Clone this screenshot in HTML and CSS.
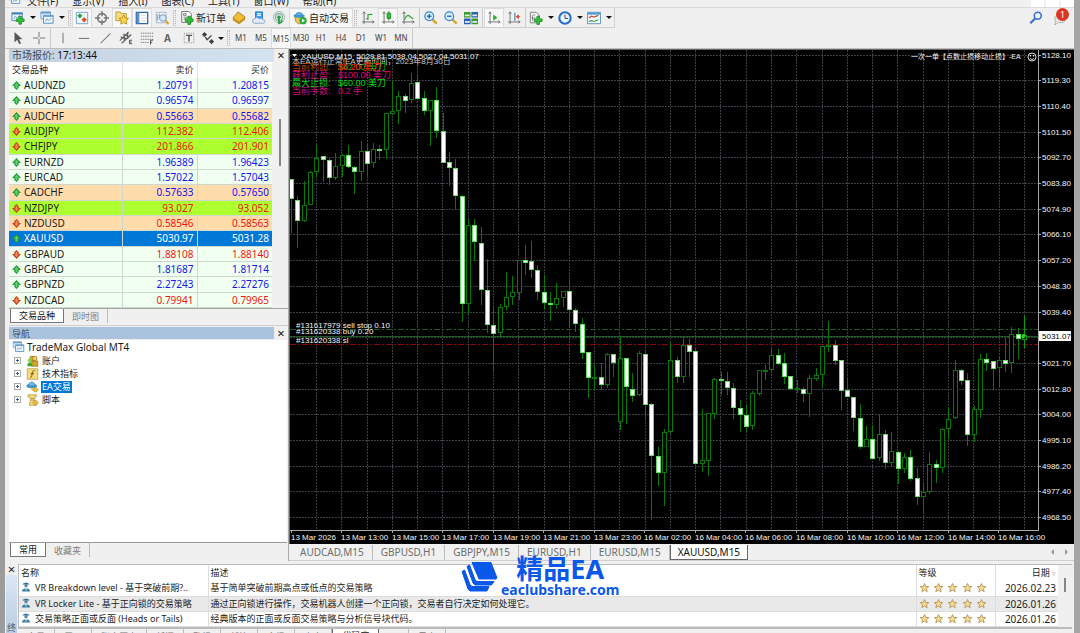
FILE: index.html
```html
<!DOCTYPE html>
<html lang="zh-CN">
<head>
<meta charset="utf-8">
<title>XAUUSD,M15</title>
<link rel="stylesheet" href="styles.css">
</head>
<body>
<svg class="sprite" aria-hidden="true">
  <symbol id="up" viewBox="0 0 10 10"><path d="M5 0 10 5.500H7.500V7.500L5 10 2.500 7.500V5.500H0z" fill="#27963a"/><path d="M5 2 7.500 5H6v3H4V5H2.500z" fill="#5fd46c"/></symbol>
  <symbol id="down" viewBox="0 0 10 10"><path d="M5 10 10 4.500H7.500V2.500L5 0 2.500 2.500V4.500H0z" fill="#c23f1c"/><path d="M5 8 7.500 5H6V2H4v3H2.500z" fill="#f58a5c"/></symbol>
  <symbol id="newchart" viewBox="0 0 16 16"><path d="M1 2h12v9H1z" fill="#e8f3fc" stroke="#4b83b4"/><path d="M1 3h12" stroke="#4b83b4" stroke-width="2"/><path d="M3 9l2-3 2 2 3-3" fill="none" stroke="#6a9cc8"/><path d="M9 6h3v3h3v3h-3v3H9v-3H6V9h3z" fill="#2fc233" stroke="#13811b" stroke-width=".8"/></symbol>
  <symbol id="windows" viewBox="0 0 16 16"><path d="M1 1h11v8H1z" fill="#dcecf9" stroke="#6a9fce"/><path d="M1 2h11" stroke="#6a9fce" stroke-width="2"/><path d="M4 5h11v9H4z" fill="#eef6fd" stroke="#4d86ba"/><path d="M4 6h11" stroke="#6a9fce" stroke-width="1.500"/><path d="M6 12l2-3 2 2 3-3" fill="none" stroke="#5c94c6"/></symbol>
  <symbol id="market" viewBox="0 0 16 16"><path d="M1.500 1.500h13v13h-13z" fill="#f3f9ff" stroke="#5f9fd0"/><path d="M5.500 2.500 8.500 5.500 5.500 8.500 2.500 5.500z" fill="#2aa53a"/><path d="M10.500 7 13.500 10l-3 3-3-3z" fill="#de4a24"/></symbol>
  <symbol id="target" viewBox="0 0 16 16"><circle cx="8" cy="8" r="5" fill="none" stroke="#777" stroke-width="1.800"/><path d="M8 0v6M8 10v6M0 8h6M10 8h6" stroke="#777" stroke-width="1.600"/></symbol>
  <symbol id="navig" viewBox="0 0 16 16"><path d="M1 3V1h5l1 2h6v8H1z" fill="#f6dc80" stroke="#b9963a"/><path d="M10 4.500l1.700 3.500 3.800.5-2.800 2.700.7 3.800-3.400-1.800L6.600 15l.7-3.800-2.800-2.700 3.800-.5z" fill="#ffd84a" stroke="#b98918"/></symbol>
  <symbol id="termi" viewBox="0 0 16 16"><path d="M1.500 1.500h13v13h-13z" fill="#fff" stroke="#336da8" stroke-width="1.500"/><path d="M2 2h3v12H2z" fill="#5c93c9"/><path d="M7 5h6M7 8h6M7 11h6" stroke="#cfdcea"/></symbol>
  <symbol id="tester" viewBox="0 0 16 16"><path d="M1.500 1.500h11v12h-11z" fill="#f1f7fc" stroke="#9ab4cc"/><path d="M3 4v7M5 3v5" stroke="#6a93b8"/><circle cx="9" cy="8" r="3.800" fill="#d7eafa" stroke="#6b8faf"/><path d="M12 11l3.500 4" stroke="#dca32a" stroke-width="2.400"/></symbol>
  <symbol id="order" viewBox="0 0 16 16"><path d="M2 .5h8l3 3V13H2z" fill="#fff" stroke="#666"/><path d="M4 3h3v2H4zM4 7h6M4 9h4" stroke="#777" fill="none"/><path d="M9 6h3v3h3v3h-3v3.500H9V12H6V9h3z" fill="#2fc233" stroke="#13811b" stroke-width=".8"/></symbol>
  <symbol id="gold" viewBox="0 0 16 16"><path d="M7 1l8 6-7 7-7-6z" fill="#eebd3a" stroke="#a97716"/><path d="M1 8l7 4 7-5v3l-7 5-7-4.500z" fill="#c98f1f"/></symbol>
  <symbol id="vps" viewBox="0 0 16 16"><path d="M4 1h8v8H4z" fill="#3aa0ea" stroke="#2078bd"/><path d="M6 3h4M6 5h4" stroke="#e8f6ff" stroke-width="1.500"/><path d="M3 14a2.500 2.500 0 010-5c1-2 4-2 5 0 2-1 4-.5 4.500 1A2 2 0 0113 14z" fill="#e4edf7" stroke="#7fa2c9"/></symbol>
  <symbol id="signal" viewBox="0 0 16 16"><circle cx="8" cy="7" r="6.500" fill="#e2ebef" stroke="#9fb4bd"/><circle cx="8" cy="7" r="4" fill="none" stroke="#7fb08c" stroke-width="1.400"/><circle cx="8" cy="7" r="2" fill="#2b9e46"/><path d="M8 8v6c2 0 3-1 4-3" stroke="#2b9e46" stroke-width="2" fill="none"/></symbol>
  <symbol id="robot" viewBox="0 0 16 16"><path d="M2 6h10l-1 6-4 3-4-3z" fill="#f0c954" stroke="#b08a26"/><ellipse cx="7" cy="5.500" rx="6.500" ry="2.300" fill="#3d95c9"/><path d="M3 4.500C3 1 11 1 11 4.500" fill="#62b2df" stroke="#2b7fb3"/><circle cx="11.500" cy="11" r="4.200" fill="#27ae38"/><path d="M10.200 8.800l3.600 2.200-3.600 2.200z" fill="#fff"/></symbol>
  <symbol id="axes" viewBox="0 0 16 16"><path d="M3.500 1v14M1 12.500h14M2 3l1.500-2L5 3M13 11l2 1.500-2 1.500" stroke="#666" fill="none"/></symbol>
  <symbol id="bars" viewBox="0 0 16 16"><use href="#axes"/><path d="M8 10V4h3V3M8 9H6M11 4h2" stroke="#2c9b36" fill="none" stroke-width="1.300"/></symbol>
  <symbol id="candle" viewBox="0 0 16 16"><use href="#axes"/><path d="M9 0v11" stroke="#16851f"/><path d="M7 2.500h4v6H7z" fill="#2bc435" stroke="#16851f"/></symbol>
  <symbol id="linech" viewBox="0 0 16 16"><use href="#axes"/><path d="M4 10c2-5 4-6 6-4 1 1 2 2 4 3" stroke="#35a440" stroke-width="1.400" fill="none"/></symbol>
  <symbol id="zin" viewBox="0 0 16 16"><path d="M9.500 9.500l5 5" stroke="#d9a52c" stroke-width="2.800"/><circle cx="6" cy="6" r="5" fill="#d9efff" stroke="#3b87cc" stroke-width="1.500"/><path d="M6 3.500v5M3.500 6h5" stroke="#1f6fbc" stroke-width="1.600"/></symbol>
  <symbol id="zout" viewBox="0 0 16 16"><path d="M9.500 9.500l5 5" stroke="#d9a52c" stroke-width="2.800"/><circle cx="6" cy="6" r="5" fill="#d9efff" stroke="#3b87cc" stroke-width="1.500"/><path d="M3.500 6h5" stroke="#1f6fbc" stroke-width="1.600"/></symbol>
  <symbol id="tile" viewBox="0 0 16 16"><path d="M0 1h7.500v6.500H0zM8.500 8.500H16V15H8.500z" fill="#3b9a2c"/><path d="M8.500 1H16v6.500H8.500zM0 8.500h7.500V15H0z" fill="#2d5fb4"/><path d="M1 4h5.500v2H1zM9.500 4H15v2H9.500zM1 11.500h5.500v2H1zM9.500 11.500H15v2H9.500z" fill="#dff0e6"/></symbol>
  <symbol id="scroll" viewBox="0 0 16 16"><use href="#axes"/><path d="M7 4l5 3.500L7 11z" fill="#2fae3a"/></symbol>
  <symbol id="shift" viewBox="0 0 16 16"><use href="#axes"/><path d="M9 2v9" stroke="#447ca8" stroke-width="1.300"/><path d="M10.500 6.500l2.500-2v4zM13 6.500h2" fill="#d2492a" stroke="#d2492a"/></symbol>
  <symbol id="indi" viewBox="0 0 16 16"><path d="M1.500 1.500h7l3 3v9h-10z" fill="#f4f4f4" stroke="#777"/><path d="M4 11V6c0-2 2-2 3-1M3 8h4" stroke="#777" fill="none"/><path d="M9 6h3v3h3v3h-3v3.500H9V12H6V9h3z" fill="#2fc233" stroke="#13811b" stroke-width=".8"/></symbol>
  <symbol id="clock" viewBox="0 0 16 16"><circle cx="8" cy="8" r="6.500" fill="#eaf4fd" stroke="#2a6fc0" stroke-width="2.400"/><path d="M8 4v4.500h3.500" stroke="#333" fill="none"/></symbol>
  <symbol id="template" viewBox="0 0 16 16"><path d="M.5 1.500h15v13H.5z" fill="#f2f8fd" stroke="#4b8ac0"/><path d="M1 3h14" stroke="#5b9bd3" stroke-width="2.400"/><path d="M2 8l3-2 3 1 5-2" stroke="#c0543c" fill="none" stroke-width="1.300"/><path d="M2 12l3-1 3 1 5-2" stroke="#4a9b50" fill="none" stroke-width="1.300"/></symbol>
  <symbol id="cursor" viewBox="0 0 16 16"><path d="M4 1v12l3-3 2.500 5 2-1L9 9.500h4z" fill="#555"/></symbol>
  <symbol id="cross" viewBox="0 0 16 16"><path d="M8 1v6M8 9v6M1 8h6M9 8h6" stroke="#777" stroke-width="1.200"/></symbol>
  <symbol id="vline" viewBox="0 0 16 16"><path d="M8 2v12" stroke="#777" stroke-width="1.200"/></symbol>
  <symbol id="hline" viewBox="0 0 16 16"><path d="M2 8.500h12" stroke="#777" stroke-width="1.200"/></symbol>
  <symbol id="dline" viewBox="0 0 16 16"><path d="M3 14L14 3" stroke="#777" stroke-width="1.200"/></symbol>
  <symbol id="channel" viewBox="0 0 16 16"><path d="M1 11L11 1M3 14L14 4M2 7l7 2M5 4l7 3M6 12V3M10 9V1" stroke="#555" stroke-width="1.200"/><path d="M15 10.500h-3v4h3M12 12.500h2.500" stroke="#444" fill="none"/></symbol>
  <symbol id="fibo" viewBox="0 0 16 16"><path d="M1 2.500h14M1 6h14M1 9.500h14M1 13h9" stroke="#666" stroke-dasharray="1.500 1"/><path d="M12 15.500v-5h3M12 13h2" stroke="#444" fill="none"/></symbol>
  <symbol id="label" viewBox="0 0 16 16"><path d="M2.500 2.500h11v11h-11z" fill="none" stroke="#888" stroke-dasharray="1 1"/><path d="M4.500 5h7M8 5v7" stroke="#555" stroke-width="1.700"/></symbol>
  <symbol id="arrows" viewBox="0 0 16 16"><path d="M4 1l3 3-3 3-3-3zM12 9l3 3-3 3-3-3z" fill="#444"/><path d="M5 7l2 3 5-5" stroke="#444" fill="none" stroke-width="1.600"/></symbol>
  <symbol id="users" viewBox="0 0 16 16"><path d="M5 2h6v6H5zM7 8h8v7H7z" fill="#d6a62c" stroke="#9a7413"/><circle cx="11" cy="4.500" r="3" fill="#f1cf61" stroke="#9a7413"/><circle cx="4" cy="7" r="2.500" fill="#8fd14f"/><path d="M1 15c0-7 7-7 7 0z" fill="#3ca62b"/></symbol>
  <symbol id="func" viewBox="0 0 16 16"><path d="M1 1h14v14H1z" fill="#f4dc7c" stroke="#b8983a"/><path d="M11 3.500C8 3 8 6 7.500 8S7 13 5 12.500M5.500 7.500h4.500" stroke="#6b5210" fill="none" stroke-width="1.300"/></symbol>
  <symbol id="hat" viewBox="0 0 16 16"><ellipse cx="7" cy="6.500" rx="7" ry="3" fill="#3f94cb"/><path d="M3 5.500C3 0 11 0 11 5.500" fill="#76bce6" stroke="#3582b5"/><path d="M5 9c0 3 2 4 4 4l2-3" fill="#f2cf65"/><path d="M12 8l3.500 3.500L12 15l-3.500-3.500z" fill="#f0c23c" stroke="#a97d15"/></symbol>
  <symbol id="script" viewBox="0 0 16 16"><path d="M2 1h11v3h-2v8h2v3H4v-3h1V4H2z" fill="#f3db84" stroke="#b8983a"/><path d="M6 6h4M6 8h4" stroke="#a88a30"/><path d="M12 8l3.500 3.500L12 15l-3.500-3.500z" fill="#f0c23c" stroke="#a97d15"/></symbol>
  <symbol id="expert" viewBox="0 0 12 12"><path d="M2 2l4-1.500L10 2v1H2z" fill="#2a6f94"/><circle cx="6" cy="4.500" r="2" fill="#58869c"/><path d="M1 11.500C1 6 11 6 11 11.500z" fill="#3e7f9f"/><path d="M5 7h2l-1 4z" fill="#e6f1f7"/></symbol>
  <symbol id="stars" viewBox="0 0 68 12"><g fill="#f3df90" stroke="#c09a62"><path id="st" d="M5.500 1.500l1.200 2.900 3.100.2-2.400 2 .8 3.100-2.700-1.700-2.700 1.700.8-3.100-2.400-2 3.100-.2z"/><use href="#st" x="14"/><use href="#st" x="28"/><use href="#st" x="43"/><use href="#st" x="57"/></g></symbol>
</svg>

<div class="app">
  <nav class="menubar">
    <svg class="menu-logo"><use href="#windows"/></svg>
    <button>文件(F)</button><button>显示(V)</button><button>插入(I)</button><button>图表(C)</button><button>工具(T)</button><button>窗口(W)</button><button>帮助(H)</button>
    <span class="winbtns"><i></i><i></i><i></i></span>
  </nav>

  <div class="toolbar main-tools">
    <div class="tools">
      <button class="drop" aria-label="新图表"><svg><use href="#newchart"/></svg><b></b></button>
      <button class="drop" aria-label="配置"><svg><use href="#windows"/></svg><b></b></button>
      <i class="grip"></i>
      <button class="on" aria-label="市场报价"><svg><use href="#market"/></svg></button>
      <button aria-label="数据窗口"><svg><use href="#target"/></svg></button>
      <button class="on" aria-label="导航"><svg><use href="#navig"/></svg></button>
      <button class="on" aria-label="终端"><svg><use href="#termi"/></svg></button>
      <button aria-label="测试"><svg><use href="#tester"/></svg></button>
      <i class="grip"></i>
      <button class="wide"><svg><use href="#order"/></svg>新订单</button>
      <button aria-label="编辑器"><svg><use href="#gold"/></svg></button>
      <button aria-label="主机"><svg><use href="#vps"/></svg></button>
      <button aria-label="信号"><svg><use href="#signal"/></svg></button>
      <button class="wide on"><svg><use href="#robot"/></svg>自动交易</button>
      <i class="grip"></i>
      <button aria-label="柱状图"><svg><use href="#bars"/></svg></button>
      <button class="on" aria-label="蜡烛图"><svg><use href="#candle"/></svg></button>
      <button aria-label="折线图"><svg><use href="#linech"/></svg></button>
      <i class="sep"></i>
      <button aria-label="放大"><svg><use href="#zin"/></svg></button>
      <button aria-label="缩小"><svg><use href="#zout"/></svg></button>
      <button aria-label="平铺"><svg><use href="#tile"/></svg></button>
      <i class="sep"></i>
      <button class="on" aria-label="自动滚动"><svg><use href="#scroll"/></svg></button>
      <button aria-label="图表平移"><svg><use href="#shift"/></svg></button>
      <i class="sep"></i>
      <button class="drop" aria-label="指标"><svg><use href="#indi"/></svg><b></b></button>
      <button class="drop" aria-label="周期"><svg><use href="#clock"/></svg><b></b></button>
      <button class="drop" aria-label="模板"><svg><use href="#template"/></svg><b></b></button>
    </div>
    <div class="right-tools">
      <button aria-label="搜索"><svg viewBox="0 0 16 16"><circle cx="10" cy="5.500" r="4" fill="#e9f2fd" stroke="#3e6fc8" stroke-width="1.800"/><path d="M7 8.500L1.500 14" stroke="#3e6fc8" stroke-width="2.600"/></svg></button>
      <button class="notify" aria-label="通知"><svg viewBox="0 0 16 16"><path d="M2 8c0-5 12-5 12 1s-6 4-8 4l-4 3 1-4z" fill="#e6e6e6" stroke="#aaa"/></svg><span>1</span></button>
    </div>
  </div>

  <div class="toolbar line-tools">
    <button aria-label="光标"><svg><use href="#cursor"/></svg></button>
    <button aria-label="十字"><svg><use href="#cross"/></svg></button>
    <i class="sep"></i>
    <button aria-label="垂直线"><svg><use href="#vline"/></svg></button>
    <button aria-label="水平线"><svg><use href="#hline"/></svg></button>
    <button aria-label="趋势线"><svg><use href="#dline"/></svg></button>
    <button aria-label="通道"><svg><use href="#channel"/></svg></button>
    <button aria-label="斐波那契"><svg><use href="#fibo"/></svg></button>
    <button class="letter">A</button>
    <button aria-label="标签"><svg><use href="#label"/></svg></button>
    <button class="drop" aria-label="箭头"><svg><use href="#arrows"/></svg><b></b></button>
    <i class="grip"></i>
    <div class="periods"><button>M1</button><button>M5</button><button class="on">M15</button><button>M30</button><button>H1</button><button>H4</button><button>D1</button><button>W1</button><button>MN</button></div>
    <i class="sep"></i>
  </div>

  <div class="workspace">
    <aside class="side">
      <section class="market">
        <header class="cap cap-light"><h2>市场报价: <b>17:13:44</b></h2><button aria-label="关闭">×</button></header>
        <div class="market-body">
          <table class="quotes">
            <colgroup><col class="c-sym"><col class="c-bid"><col></colgroup>
            <thead><tr><th>交易品种</th><th>卖价</th><th>买价</th></tr></thead>
            <tbody>
              <tr class="up"><td><svg><use href="#up"/></svg>AUDNZD</td><td>1.20791</td><td>1.20815</td></tr>
              <tr class="up"><td><svg><use href="#up"/></svg>AUDCAD</td><td>0.96574</td><td>0.96597</td></tr>
              <tr class="up peach"><td><svg><use href="#up"/></svg>AUDCHF</td><td>0.55663</td><td>0.55682</td></tr>
              <tr class="dn lime"><td><svg><use href="#down"/></svg>AUDJPY</td><td>112.382</td><td>112.406</td></tr>
              <tr class="dn lime"><td><svg><use href="#down"/></svg>CHFJPY</td><td>201.866</td><td>201.901</td></tr>
              <tr class="up"><td><svg><use href="#up"/></svg>EURNZD</td><td>1.96389</td><td>1.96423</td></tr>
              <tr class="up"><td><svg><use href="#up"/></svg>EURCAD</td><td>1.57022</td><td>1.57043</td></tr>
              <tr class="up peach"><td><svg><use href="#up"/></svg>CADCHF</td><td>0.57633</td><td>0.57650</td></tr>
              <tr class="dn lime"><td><svg><use href="#down"/></svg>NZDJPY</td><td>93.027</td><td>93.052</td></tr>
              <tr class="dn peach"><td><svg><use href="#down"/></svg>NZDUSD</td><td>0.58546</td><td>0.58563</td></tr>
              <tr class="sel"><td><svg><use href="#up"/></svg>XAUUSD</td><td>5030.97</td><td>5031.28</td></tr>
              <tr class="dn"><td><svg><use href="#down"/></svg>GBPAUD</td><td>1.88108</td><td>1.88140</td></tr>
              <tr class="up"><td><svg><use href="#up"/></svg>GBPCAD</td><td>1.81687</td><td>1.81714</td></tr>
              <tr class="up"><td><svg><use href="#up"/></svg>GBPNZD</td><td>2.27243</td><td>2.27276</td></tr>
              <tr class="dn"><td><svg><use href="#down"/></svg>NZDCAD</td><td>0.79941</td><td>0.79965</td></tr>
            </tbody>
          </table>
          <div class="gutter"><i></i></div>
        </div>
        <div class="tabs"><button class="cur">交易品种</button><button>即时图</button></div>
      </section>
      <section class="navi">
        <header class="cap"><h2>导航</h2><button aria-label="关闭">×</button></header>
        <ul class="tree">
          <li class="root"><svg><use href="#windows"/></svg><span>TradeMax Global MT4</span></li>
          <li><i></i><svg><use href="#users"/></svg><span>账户</span></li>
          <li><i></i><svg><use href="#func"/></svg><span>技术指标</span></li>
          <li class="picked"><i></i><svg><use href="#hat"/></svg><span>EA交易</span></li>
          <li><i></i><svg><use href="#script"/></svg><span>脚本</span></li>
        </ul>
        <div class="tabs"><button class="cur">常用</button><button>收藏夹</button></div>
      </section>
    </aside>

    <main class="chart-area">
      <svg id="chart" class="chart" viewBox="289 49 785 495" preserveAspectRatio="xMinYMin meet"></svg>
      <div class="chart-tabs">
        <button>AUDCAD,M15</button><button>GBPUSD,H1</button><button>GBPJPY,M15</button><button>EURUSD,H1</button><button>EURUSD,M15</button><button class="cur">XAUUSD,M15</button>
        <span class="pager"><i></i><i class="next"></i></span>
      </div>
    </main>
  </div>

  <section class="terminal">
    <div class="rail"><button aria-label="关闭">×</button><div>终端</div></div>
    <div class="term-main">
      <div class="term-body">
        <table class="codes">
          <colgroup><col class="c-name"><col><col class="c-rate"><col class="c-date"></colgroup>
          <thead><tr><th>名称</th><th>描述</th><th>等级</th><th>日期 <small>▿</small></th></tr></thead>
          <tbody>
            <tr><td><svg><use href="#expert"/></svg>VR Breakdown level - 基于突破前期?..</td><td>基于简单突破前期高点或低点的交易策略</td><td><svg class="stars"><use href="#stars"/></svg></td><td>2026.02.23</td></tr>
            <tr class="alt"><td><svg><use href="#expert"/></svg>VR Locker Lite - 基于正向锁的交易策略</td><td>通过正向锁进行操作，交易机器人创建一个正向锁，交易者自行决定如何处理它。</td><td><svg class="stars"><use href="#stars"/></svg></td><td>2026.01.26</td></tr>
            <tr><td><svg><use href="#expert"/></svg>交易策略正面或反面 (Heads or Tails)</td><td>经典版本的正面或反面交易策略与分析信号块代码。</td><td><svg class="stars"><use href="#stars"/></svg></td><td>2026.01.26</td></tr>
          </tbody>
        </table>
        <div class="gutter"><i></i></div>
      </div>
      <div class="term-tabs"><button>交易</button><button>展示</button><button>账户历史</button><button>新闻</button><button>警报</button><button>邮箱</button><button>市场</button><button>文章</button><button class="cur">代码库</button><button>EA</button><button>日志</button></div>
    </div>
  </section>
</div>

<div class="mark">
  <svg viewBox="0 0 38 32"><g fill="#0a58ea" stroke="#0a58ea" stroke-linejoin="round"><path d="M12 1.500h19L37 17l-1 1H19z"/><path d="M7 5.500l2.500-1.500L15 18.500l2 2h17L31.500 24H15l-2-2z"/><path d="M2 10.500L4.500 9l5.500 14.500 2 2h17L27 30H10l-2-2z"/></g></svg>
  <p><strong>精品EA</strong><span>eaclubshare.com</span></p>
</div>
<script src="chart.js"></script>
</body>
</html>
```
FILE: styles.css
```css
* { box-sizing: border-box; }
body { margin: 0; font: 10px/14px "Noto Sans", "Noto Sans CJK SC", sans-serif; color: #1c1c1c; }
button { font: inherit; color: inherit; border: 0; background: none; padding: 0; margin: 0; }
h2, p, ul { margin: 0; padding: 0; font-size: inherit; font-weight: normal; list-style: none; }
.sprite { position: absolute; width: 0; height: 0; }

.app { height: 100vh; overflow: hidden; display: flex; flex-direction: column; background: #f0f0f0; border-left: 5px solid #9c9c9c; border-right: 6px solid #a6a6a6; }

.menubar { height: 8px; flex: none; display: flex; align-items: flex-end; gap: 14px; padding-left: 3px; border-bottom: 1px solid #dadada; overflow: hidden; }
.menubar button { line-height: 12px; white-space: nowrap; }
.menu-logo { width: 13px; height: 12px; margin: 0 -8px 2px 0; }
.winbtns { margin-left: auto; display: flex; gap: 2px; }
.winbtns i { width: 13px; height: 8px; background: #fff; }

.toolbar { flex: none; display: flex; align-items: center; color: #222; }
.toolbar svg { width: 14px; height: 14px; flex: none; }
.toolbar button { width: 20px; height: 100%; display: flex; align-items: center; justify-content: center; white-space: nowrap; }
.toolbar button.on { background: #f8f8f8; border: 1px solid #dcdcdc; border-bottom: 0; }
.toolbar button.drop { width: 29px; gap: 5px; }
.drop b { border: 3px solid transparent; border-top-color: #111; border-bottom: 0; }
.toolbar button.wide { width: auto; gap: 2px; padding: 0 3px; }
.grip { width: 3px; height: 16px; margin: 0 1px; flex: none; border-left: 1px solid #ccc; border-right: 1px dotted #b5b5b5; }
.sep { width: 1px; height: 100%; margin: 0 1px; flex: none; background: #ccc; }
.main-tools { height: 20px; justify-content: space-between; }
.tools { height: 100%; display: flex; align-items: center; padding-left: 4px; border: solid #cfcfcf; border-width: 0 1px 1px 0; }
.right-tools { display: flex; gap: 4px; padding-right: 4px; }
.notify { position: relative; }
.notify span { position: absolute; left: 6px; top: -3px; width: 13px; height: 13px; border-radius: 7px; background: #de3520; color: #fff; font-size: 9px; line-height: 13px; text-align: center; }
.line-tools { height: 21px; padding: 0 0 0 2px; border-bottom: 1px solid #bdbdbd; font-size: 8px; color: #444; }
.line-tools > button { width: 21px; }
.line-tools .letter { font-size: 10px; font-weight: bold; color: #666; }
.line-tools button.drop { width: 27px; gap: 3px; }
.periods { height: 100%; display: flex; }

.workspace { flex: 1; min-height: 0; display: flex; }
.side { width: 284px; flex: none; display: flex; flex-direction: column; padding-left: 4px; border-right: 1px solid #aaa; }
.market { display: flex; flex-direction: column; height: 277px; flex: none; border-bottom: 1px solid #cfcfcf; }
.navi { flex: 1; min-height: 0; display: flex; flex-direction: column; padding-top: 1px; }
.cap { flex: none; height: 13px; display: flex; line-height: 13px; }
.cap h2 { flex: 1; background: #a9c3df; padding-left: 3px; color: #3c4a5c; font-size: 9px; }
.cap button { width: 14px; font-size: 13px; color: #111; }
.cap-light h2 { background: linear-gradient(90deg, #c3d1e0, #d5e2f0); font-size: 10px; }
.cap-light b { font-weight: normal; color: #111; }
.market-body { flex: 1; min-height: 0; display: flex; border-bottom: 1px solid #a5a5a5; }
table { border-collapse: collapse; table-layout: fixed; }
td, th { padding: 0; font-weight: normal; text-align: left; white-space: nowrap; overflow: hidden; }
.quotes { flex: 1; height: 100%; line-height: 12px; }
.c-sym { width: 113px; }
.c-bid { width: 75px; }
.quotes thead tr { background: #fff; height: 16px; }
.quotes th { padding: 0 3px; font-size: 9px; border-right: 1px solid #e3e3e3; }
.quotes td { padding: 0 3px; border: solid #cfd8cf; border-width: 0 1px 1px 0; }
.quotes tr > :not(:first-child) { text-align: right; }
.quotes tr > :last-child { border-right: 0; }
.quotes tbody tr { background: #f0fff0; }
.quotes tbody tr.peach { background: #ffdcac; }
.quotes tbody tr.lime { background: #adff2f; }
.quotes tbody tr.sel { background: #0078d7; color: #fff; }
.quotes .up td + td { color: #1414ee; }
.quotes .dn td + td { color: #f01414; }
.quotes svg { width: 9px; height: 9px; margin-right: 3px; vertical-align: -1px; }
.gutter { width: 14px; flex: none; display: flex; justify-content: center; }
.gutter i { width: 2px; background: #858585; }
.market .gutter { width: 16px; padding-top: 57px; }
.market .gutter i { height: 47px; }

.tabs { flex: none; height: 18px; display: flex; align-items: flex-start; padding-left: 1px; }
.market .tabs { height: 16px; }
.tabs button { height: 14px; line-height: 13px; padding: 0 8px; font-size: 9px; color: #7d7d7d; border-right: 1px solid #bbb; }
.tabs .cur { background: #fff; color: #111; border: solid #777; border-width: 0 1px 1px; }
.navi .cap { border-bottom: 1px solid #eee; }
.tree { flex: 1; min-height: 0; background: #fff; border-bottom: 1px solid #999; margin-right: 1px; }
.tree li { display: flex; align-items: center; height: 13px; padding-left: 5px; line-height: 12px; font-size: 9px; }
.tree .root { margin-bottom: 1px; padding-left: 3px; gap: 2px; font-size: 10px; }
.tree svg { width: 13px; height: 12px; flex: none; }
.tree li i { width: 7px; height: 7px; margin-right: 5px; border: 1px solid #aaa; background: linear-gradient(#3a5e9c, #3a5e9c) center / 3px 1px no-repeat, linear-gradient(#3a5e9c, #3a5e9c) center / 1px 3px no-repeat, #fff; }
.tree li:not(.root) span { margin-left: 2px; padding: 0 1px; }
.tree .picked span { background: #0078d7; color: #fff; }

.chart-area { flex: 1; min-width: 0; display: flex; flex-direction: column; }
.chart { flex: 1; min-height: 0; width: 100%; background: #000; }
.chart text { font: 8px "Liberation Sans", "Noto Sans CJK SC", sans-serif; fill: #f4f4f4; }
.chart .stat { font-size: 9px; }
.chart .head { font-size: 7px; }
.chart .price-now { fill: #000; }
.chart-tabs { flex: none; height: 17px; display: flex; align-items: flex-start; padding: 1px 0 0 3px; border-bottom: 1px solid #cfcfcf; }
.chart-tabs button { height: 15px; line-height: 13px; padding: 0 8px; color: #6d6d6d; border-right: 1px solid #bbb; }
.chart-tabs .cur { background: #fff; color: #111; border: solid #666; border-width: 0 1px 1px; padding: 0 7px; }
.pager { margin-left: auto; display: flex; gap: 11px; padding: 4px 6px 0 0; }
.pager i { border: 3px solid transparent; border-right-color: #999; border-left: 0; }
.pager .next { border-left: 3px solid #999; border-right: 0; }

.terminal { flex: none; height: 72px; display: flex; padding-top: 3px; }
.rail { width: 13px; flex: none; display: flex; flex-direction: column; padding: 0 1px; }
.rail button { height: 11px; line-height: 9px; font-size: 13px; }
.rail div { flex: 1; min-height: 0; background: linear-gradient(#dbe7f5, #b9cde3); writing-mode: vertical-rl; padding-top: 48px; font-size: 9px; line-height: 11px; overflow: hidden; color: #555; }
.term-main { flex: 1; min-width: 0; display: flex; flex-direction: column; overflow: hidden; }
.term-body { flex: none; display: flex; border: solid #bbb; border-width: 1px 0 2px 1px; margin-right: 2px; background: #fff; }
.term-body .gutter { background: #f0f0f0; padding-top: 13px; }
.term-body .gutter i { height: 14px; }
.codes { flex: 1; width: 0; font-size: 9px; line-height: 14px; }
.codes tr { height: 15px; }
.codes thead tr { height: 16px; }
.codes td, .codes th { padding: 0 2px; border-right: 1px solid #ddd; }
.codes tbody tr { border-bottom: 1px solid #ddd; }
.codes .alt { background: #e9e9e9; }
.c-name { width: 189px; }
.c-rate { width: 79px; }
.c-date { width: 63px; }
.codes tr > :last-child { text-align: right; border-right: 0; padding-right: 2px; }
.codes td:last-child { font-size: 10px; }
.codes small { font-size: 7px; color: #999; }
.codes svg { width: 10px; height: 10px; margin: 0 4px 0 0; vertical-align: -1px; }
.codes .stars { width: 68px; height: 12px; margin: 0; display: block; }
.term-tabs { flex: none; display: flex; color: #777; font-size: 9px; line-height: 14px; }
.term-tabs button { height: 16px; padding: 0 9px; border-right: 1px solid #bbb; }
.term-tabs .cur { background: #fff; color: #111; border: 1px solid #666; border-top: 0; }

.mark { position: absolute; left: 460px; top: 555px; display: flex; color: #0a58ea; }
.mark svg { width: 38px; height: 32px; margin-top: 6px; }
.mark p { display: flex; flex-direction: column; align-items: center; margin-left: 3px; }
.mark strong { font: bold 27px/28px "Noto Sans", "Noto Sans CJK SC", sans-serif; }
.mark span { font: bold 14px/14px "Noto Sans", sans-serif; }
```
FILE: chart.js
```js
// Candles: [high, top, bottom, low, filled] in chart units, oldest first.
const candles = [
  [179,179,199,233,1],[196,200,221,248,1],[181,205,221,222,0],[171,172,205,205,0],[145,158,172,177,0],
  [156,156,160,182,1],[158,160,178,185,1],[153,166,178,180,0],[154,155,166,177,0],[145,155,167,168,1],
  [166,167,172,194,1],[141,151,172,181,0],[143,151,164,176,1],[143,149,163,168,0],[145,149,151,160,1],
  [113,113,150,159,0],[81,111,114,115,0],[91,96,111,124,0],[94,96,101,113,1],[73,83,100,103,0],
  [75,82,99,100,1],[91,98,111,115,1],[100,100,111,146,0],[87,100,131,138,1],[113,131,163,163,1],
  [152,162,168,186,1],[159,168,196,210,1],[195,196,304,322,1],[219,225,304,314,0],[219,225,242,261,1],
  [227,243,290,305,1],[259,290,325,333,1],[307,325,334,371,1],[304,307,333,337,0],[272,297,307,310,0],
  [276,292,297,305,0],[260,260,293,300,0],[245,260,263,275,1],[241,261,270,278,1],[265,270,292,300,1],
  [275,292,303,309,1],[292,303,305,321,1],[283,298,305,309,0],[291,291,298,307,0],[280,291,310,328,1],
  [308,310,324,332,1],[318,324,353,359,1],[352,352,378,398,1],[364,377,378,390,0],[363,377,385,390,1],
  [353,354,385,388,0],[354,354,363,377,1],[337,358,422,430,0],[358,358,387,424,1],[373,389,396,402,1],
  [351,353,395,396,0],[350,354,405,419,1],[403,404,456,520,1],[447,456,473,486,1],[429,432,473,506,0],
  [342,360,432,434,0],[357,360,377,383,1],[336,345,377,383,0],[339,345,352,377,1],[349,351,464,464,1],
  [409,460,464,472,0],[413,413,461,476,0],[378,379,414,419,0],[372,379,381,395,1],[372,381,388,395,1],
  [383,388,408,419,1],[400,408,415,432,1],[405,415,427,431,1],[391,393,426,430,0],[370,370,394,396,0],
  [365,370,371,380,0],[349,355,370,371,0],[349,355,364,365,1],[353,363,377,384,1],[376,376,389,390,1],
  [380,388,389,393,0],[387,389,394,402,1],[375,378,394,417,0],[368,375,379,381,0],[346,346,375,388,0],
  [321,345,347,352,0],[340,345,361,365,1],[360,360,391,410,1],[377,390,397,397,1],[397,397,418,431,1],
  [404,418,447,449,1],[426,439,447,447,0],[425,439,459,459,1],[415,434,458,461,0],[430,434,463,469,1],
  [432,451,463,467,0],[451,452,469,484,1],[453,457,469,473,0],[450,457,479,481,1],[468,478,497,505,1],
  [483,492,497,512,0],[452,464,492,494,0],[460,464,468,483,1],[428,429,468,473,0],[407,419,429,439,0],
  [360,370,418,419,0],[369,370,381,385,1],[373,380,435,446,1],[406,409,435,442,0],[354,359,410,418,0],
  [353,359,363,371,1],[361,361,369,390,1],[357,360,368,386,0],[338,360,364,372,1],[327,334,363,373,0],
  [328,334,339,359,1],[316,335,340,348,0]
];
const prices = ['5128.10','5119.30','5110.40','5101.50','5092.70','5083.80','5074.90','5066.10','5057.20','5048.30','5039.40','','5021.70','5012.80','5004.00','4995.10','4986.20','4977.40','4968.50'];
const times = ['13 Mar 2026','13 Mar 13:00','13 Mar 15:00','13 Mar 17:00','13 Mar 19:00','13 Mar 21:00','13 Mar 23:00','16 Mar 02:00','16 Mar 04:00','16 Mar 06:00','16 Mar 08:00','16 Mar 10:00','16 Mar 12:00','16 Mar 14:00','16 Mar 16:00'];

const LEFT = 290, RIGHT = 1038, TOP = 50, BOTTOM = 530, STEP = 6.32;
const out = [];
const line = (x1, y1, x2, y2, color, dash = '') =>
  out.push(`<path d="M${x1} ${y1}L${x2} ${y2}" stroke="${color}" stroke-dasharray="${dash}"/>`);
const text = (x, y, s, cls = '', fill = '') =>
  out.push(`<text x="${x}" y="${y}" class="${cls}"${fill ? ` style="fill:${fill}"` : ''}>${s}</text>`);

prices.forEach((p, i) => {
  const y = Math.round(54.7 + i * 25.68) + 0.5;
  line(LEFT, y, RIGHT, y, '#3a4046', '2 1');
  line(RIGHT, y, RIGHT + 3, y, '#aaa');
  text(1042, Math.floor(y) + 3, p);
});
for (let i = 0; i < 29; i++) {
  const x = Math.round(316 + i * STEP * 4) + 0.5;
  line(x, TOP, x, BOTTOM, '#3a4046', '2 1');
}
line(LEFT, 329.5, RIGHT, 329.5, '#1d5a22', '6 2 2 2');
line(LEFT, 336.5, RIGHT, 336.5, '#1f5c24');
line(LEFT, 344.5, RIGHT, 344.5, '#8c0808', '6 2 2 2');

candles.forEach(([h, t, b, l, full], i) => {
  const x = Math.round(291 + i * STEP);
  const last = i === candles.length - 1;
  const color = last ? '#00a000' : '#087808';
  line(x + 0.5, h, x + 0.5, l, color);
  out.push(`<rect x="${x - 1.5}" y="${t + 0.5}" width="4" height="${Math.max(b - t - 1, 1)}" fill="${full ? '#fff' : '#000'}" stroke="${full ? '#5fe05f' : color}"/>`);
});
out.push('<circle cx="1023.500" cy="336" r="2" fill="#20e020"/>');

line(RIGHT + 0.5, TOP, RIGHT + 0.5, BOTTOM, '#aaa');
line(LEFT, BOTTOM + 0.5, RIGHT + 1, BOTTOM + 0.5, '#aaa');
line(289.5, 49, 289.5, 544, '#666');
line(289, 49.5, 1074, 49.5, '#666');
times.forEach((s, i) => {
  const x = Math.round(290.5 + i * 50.55);
  line(x + 0.5, 530, x + 0.5, 533, '#aaa');
  text(x, 540, s);
});
out.push('<rect x="1039" y="331" width="32" height="10" fill="#fff"/>');
text(1042, 339, '5031.07', 'price-now');

out.push('<path d="M292 54h5l-2.500 3z" fill="#fff"/>');
text(301, 59, 'XAUUSD,M15&nbsp; 5029.81 5038.04 5027.04 5031.07');
text(292, 64, '本EA运行正常!EA更新时间，2023年8月30日', '', '#ccc');
const stats = [
  [70, '当前利润:', '$0.20 美刀', '#b84408'],
  [78, '获利止盈:', '$100.00 美刀', '#d80c84'],
  [86, '最大止损:', '$60.00 美刀', '#00dc14'],
  [94, '当前手数:', '0.2 手', '#c80c7c']
];
stats.forEach(([y, k, v, c]) => { text(292, y, k, 'stat', c); text(338, y, v, 'stat', c); });
text(338, 70, '$42.00 美刀', 'stat', '#00b010');
text(338, 70, '$0.20 美刀', 'stat', '#f01010');
text(296, 328, '#131617979 sell stop 0.10');
text(296, 334, '#131620338 buy 0.20');
text(296, 343, '#131620338 sl');
text(911, 59, '一次一单【点数止损移动止损】-EA', 'head');
out.push('<g fill="none" stroke="#ddd"><circle cx="1032" cy="57" r="4"/><path d="M1030 58.500q2 2 4 0M1030.500 55v1.500M1033.500 55v1.500"/></g>');

document.getElementById('chart').innerHTML = out.join('');
```
